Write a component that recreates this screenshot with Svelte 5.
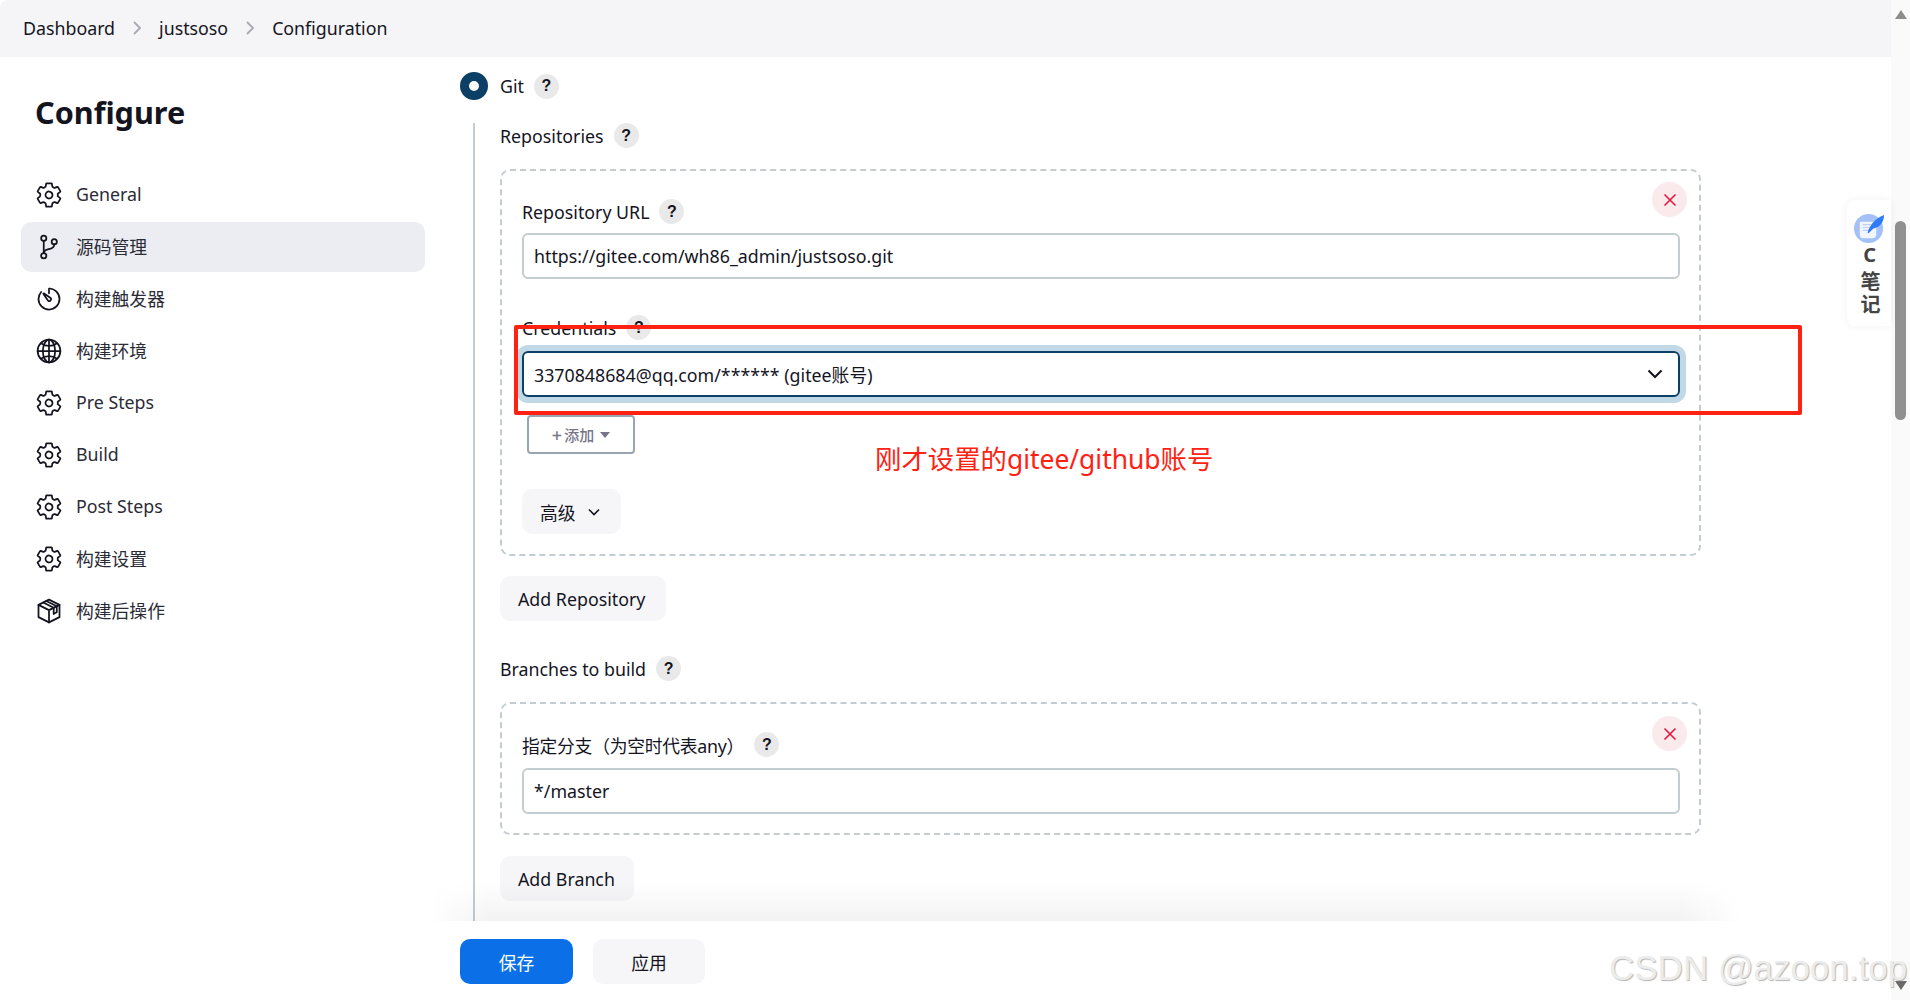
<script lang="ts">
    const crumbs = ["Dashboard", "justsoso", "Configuration"];
    const navItems = [
        { label: "General", icon: "gear" },
        { label: "源码管理", icon: "branch", active: true },
        { label: "构建触发器", icon: "timer" },
        { label: "构建环境", icon: "globe" },
        { label: "Pre Steps", icon: "gear" },
        { label: "Build", icon: "gear" },
        { label: "Post Steps", icon: "gear" },
        { label: "构建设置", icon: "gear" },
        { label: "构建后操作", icon: "cube" },
    ];
    const gear = "M262.29 192.31a64 64 0 1057.4 57.4 64.13 64.13 0 00-57.4-57.4zM416.39 256a154.34 154.34 0 01-1.53 20.79l45.21 35.46a10.81 10.81 0 012.45 13.75l-42.77 74a10.81 10.81 0 01-13.14 4.59l-44.9-18.08a16.11 16.11 0 00-15.17 1.75A164.48 164.48 0 01325 400.8a15.94 15.94 0 00-8.82 12.14l-6.73 47.89a11.08 11.08 0 01-10.68 9.17h-85.54a11.11 11.11 0 01-10.69-8.87l-6.72-47.82a16.07 16.07 0 00-9-12.22 155.3 155.3 0 01-21.46-12.57 16 16 0 00-15.11-1.71l-44.89 18.07a10.81 10.81 0 01-13.14-4.58l-42.77-74a10.8 10.8 0 012.45-13.75l38.21-30a16.05 16.05 0 006-14.08c-.36-4.17-.58-8.33-.58-12.5s.21-8.27.58-12.35a16 16 0 00-6.07-13.94l-38.19-30A10.81 10.81 0 0149.48 186l42.77-74a10.81 10.81 0 0113.14-4.59l44.9 18.08a16.11 16.11 0 0015.17-1.75A164.48 164.48 0 01187 111.2a15.94 15.94 0 008.82-12.14l6.73-47.89A11.08 11.08 0 01213.23 42h85.54a11.11 11.11 0 0110.69 8.87l6.72 47.82a16.07 16.07 0 009 12.22 155.3 155.3 0 0121.46 12.57 16 16 0 0015.11 1.71l44.89-18.07a10.81 10.81 0 0113.14 4.58l42.77 74a10.8 10.8 0 01-2.45 13.75l-38.21 30a16.05 16.05 0 00-6.05 14.08c.33 4.14.55 8.3.55 12.47z";
</script>

{#snippet help()}
    <span class="help">?</span>
{/snippet}

{#snippet closeBtn()}
    <span class="close">
        <svg viewBox="0 0 16 16" width="16" height="16"><path d="M2.5 2.5l11 11M13.5 2.5l-11 11" /></svg>
    </span>
{/snippet}

{#snippet navIcon(name: string)}
    <svg class="nav-icon" viewBox="0 0 512 512">
        {#if name === "gear"}
            <path d={gear} />
        {:else if name === "branch"}
            <circle cx="160" cy="96" r="48" />
            <circle cx="160" cy="416" r="48" />
            <path d="M160 368V144" />
            <circle cx="352" cy="160" r="48" />
            <path d="M352 208c0 128-192 48-192 160" />
        {:else if name === "timer"}
            <path d="M112.91 128A191.85 191.85 0 0064 254c-1.18 106.35 85.65 193.8 192 194 106.2.2 192-85.83 192-192 0-104.54-83.55-189.61-187.5-192a4.36 4.36 0 00-4.5 4.37V152" />
            <path d="M233.38 278.63l-79-113a8.13 8.13 0 0111.32-11.32l113 79a32.5 32.5 0 01-37.25 53.26 33.21 33.21 0 01-8.07-8.01z" />
        {:else if name === "globe"}
            <path d="M256 48C141.13 48 48 141.13 48 256s93.13 208 208 208 208-93.13 208-208S370.87 48 256 48z" />
            <path d="M256 48c-58.07 0-112.67 93.13-112.67 208S197.93 464 256 464s112.67-93.13 112.67-208S314.07 48 256 48z" />
            <path d="M117.33 117.33c38.24 27.15 86.38 43.34 138.67 43.34s100.43-16.19 138.67-43.34M394.67 394.67c-38.24-27.15-86.38-43.34-138.67-43.34s-100.43 16.19-138.67 43.34" />
            <path d="M256 48v416M464 256H48" />
        {:else}
            <path d="M256 48l192 96v224L256 464 64 368V144z" />
            <path d="M64 144l192 96 192-96M256 240v224" />
            <path d="M150 101l192 96v110M206 73l192 96" />
            <path d="M342 307l56-28V169" />
        {/if}
    </svg>
{/snippet}

<div class="shell">
    <div class="page">
        <nav class="breadcrumb">
            {#each crumbs as crumb, i}
                {#if i > 0}
                    <svg class="crumb-sep" viewBox="0 0 10 16" width="10" height="16"><path d="M2 2l6 6-6 6" /></svg>
                {/if}
                <span>{crumb}</span>
            {/each}
        </nav>

        <div class="content">
            <aside class="sidebar">
                <h1>Configure</h1>
                <ul>
                    {#each navItems as item}
                        <li class:active={item.active}>
                            {@render navIcon(item.icon)}
                            <span>{item.label}</span>
                        </li>
                    {/each}
                </ul>
            </aside>

            <main class="main">
                <div class="git-row">
                    <span class="radio"></span>
                    <span class="git-name">Git</span>
                    {@render help()}
                </div>
                <div class="git-body">
                    <div class="label">Repositories {@render help()}</div>

                    <section class="repeat repo">
                        {@render closeBtn()}
                        <div class="label">Repository URL {@render help()}</div>
                        <input class="text-input" type="text" readonly value="https://gitee.com/wh86_admin/justsoso.git" />

                        <div class="label cred">Credentials {@render help()}</div>
                        <div class="select">
                            <span>3370848684@qq.com/****** (gitee账号)</span>
                            <svg viewBox="0 0 16 10" width="16" height="10"><path d="M1.5 1.5L8 8l6.5-6.5" /></svg>
                        </div>
                        <button class="add-cred"><span class="plus">+</span>添加<i class="caret"></i></button>
                        <button class="btn advanced">
                            高级
                            <svg viewBox="0 0 12 8" width="12" height="8"><path d="M1 1.5l5 5 5-5" /></svg>
                        </button>
                    </section>

                    <button class="btn add-repo">Add Repository</button>

                    <div class="label branches">Branches to build {@render help()}</div>

                    <section class="repeat branch">
                        {@render closeBtn()}
                        <div class="label cn">指定分支（为空时代表any） {@render help()}</div>
                        <input class="text-input" type="text" readonly value="*/master" />
                    </section>

                    <button class="btn add-branch">Add Branch</button>
                </div>
            </main>
        </div>

        <footer class="footer">
            <button class="save">保存</button>
            <button class="btn apply">应用</button>
        </footer>
    </div>

    <div class="scrollbar">
        <i class="arrow up"></i>
        <div class="track"><div class="thumb"></div></div>
        <i class="arrow down"></i>
    </div>

    <!-- annotation drawn on top of the screenshot -->
    <div class="red-box"></div>
    <div class="red-note">刚才设置的gitee/github账号</div>

    <div class="note-widget">
        <svg viewBox="0 0 32 32" width="31" height="31">
            <circle cx="15" cy="16" r="15" fill="#a3c0f7" />
            <path d="M6 9h17v13q0 4-4 4H9q-3 0-3-4z" fill="#f1f5fe" />
            <path d="M9 12h9M9 15h8M9 18h6" stroke="#bfd0f5" stroke-width="1.2" />
            <path d="M14 20C17 11 23 5 31 2c0 8-5 13-11 14l-5 5z" fill="#2f7bf5" />
        </svg>
        <b>C笔记</b>
    </div>

    <div class="watermark">CSDN @azoon.top</div>
</div>

<style>
    :global(body) {
        margin: 0;
        background: #fff;
    }

    .shell {
        position: relative;
        display: flex;
        width: 1910px;
        height: 1000px;
        overflow: hidden;
        font-family: "Noto Sans", "Noto Sans CJK SC", sans-serif;
        font-size: 17.8px;
        color: #14141f;
    }

    .page {
        flex: 1;
        min-width: 0;
        display: flex;
        flex-direction: column;
    }

    .breadcrumb {
        height: 57px;
        flex: none;
        box-sizing: border-box;
        padding: 0 0 2px 23px;
        display: flex;
        align-items: center;
        gap: 17px;
        background: #f5f5f7;
        border-top-left-radius: 8px;
    }

    .crumb-sep path {
        fill: none;
        stroke: #a9a9b5;
        stroke-width: 1.8;
    }

    .content {
        flex: 1;
        min-height: 0;
        display: flex;
        overflow: hidden;
    }

    .sidebar {
        width: 460px;
        flex: none;
        box-sizing: border-box;
        padding: 32px 0 0 21px;
    }

    .sidebar h1 {
        margin: 0 0 35px 14px;
        font-size: 30.6px;
        line-height: 46px;
        font-weight: 700;
    }

    .sidebar ul {
        list-style: none;
        margin: 0;
        padding: 0;
        width: 404px;
        display: flex;
        flex-direction: column;
        gap: 2px;
    }

    .sidebar li {
        height: 50px;
        display: flex;
        align-items: center;
        gap: 13px;
        padding-left: 14px;
        border-radius: 10px;
        color: #2b2b36;
    }

    .sidebar li span {
        margin-top: -2px;
    }

    .sidebar li.active {
        background: #ecedf2;
    }

    .nav-icon {
        width: 28px;
        height: 28px;
        flex: none;
    }

    .nav-icon :global(path),
    .nav-icon :global(circle) {
        fill: none;
        stroke: #14141f;
        stroke-width: 32;
        stroke-linecap: round;
        stroke-linejoin: round;
    }

    .main {
        flex: 1;
        min-width: 0;
    }

    .git-row {
        height: 28px;
        margin-top: 15px;
        display: flex;
        align-items: center;
        gap: 12px;
    }

    .radio {
        width: 10px;
        height: 10px;
        border: 9px solid #0b3f66;
        border-radius: 50%;
        background: #fff;
    }

    .git-name {
        margin-right: -2px;
    }

    .git-body {
        margin: 23px 0 0 13px;
        padding: 0 0 200px 25px;
        width: 1203px;
        border-left: 2px solid #c3ccd1;
    }

    .label {
        display: flex;
        align-items: center;
        gap: 10px;
        height: 25px;
    }

    .label.cn {
        letter-spacing: -0.25px;
    }

    .help {
        width: 25px;
        height: 25px;
        flex: none;
        display: flex;
        align-items: center;
        justify-content: center;
        border-radius: 50%;
        background: #e9e9e9;
        font-size: 16px;
        font-weight: 700;
        font-family: "Liberation Sans", sans-serif;
    }

    .repeat {
        position: relative;
        box-sizing: border-box;
        width: 1201px;
        border: 2px dashed #c3ccd1;
        border-radius: 10px;
        padding: 28px 19px 0 20px;
    }

    .repo {
        margin-top: 21px;
        height: 387px;
    }

    .close {
        position: absolute;
        top: 11px;
        right: 12px;
        width: 35px;
        height: 35px;
        display: flex;
        align-items: center;
        justify-content: center;
        border-radius: 50%;
        background: #fbeaec;
    }

    .branch .close {
        top: 12px;
    }

    .close path {
        fill: none;
        stroke: #e6183f;
        stroke-width: 1.6;
    }

    .text-input {
        display: block;
        box-sizing: border-box;
        width: 100%;
        height: 46px;
        margin-top: 9px;
        padding: 0 10px;
        border: 2px solid #c3ccd1;
        border-radius: 6px;
        outline: none;
        background: #fff;
        font: inherit;
        color: inherit;
    }

    .label.cred {
        margin-top: 36px;
    }

    .select {
        box-sizing: border-box;
        height: 46px;
        margin-top: 11px;
        padding: 0 15px 0 10px;
        display: flex;
        align-items: center;
        justify-content: space-between;
        border: 2px solid #0b3f66;
        border-radius: 6px;
        box-shadow: 0 0 0 6px #c1d8e6;
    }

    .select path {
        fill: none;
        stroke: #14141f;
        stroke-width: 2;
    }

    button {
        font: inherit;
        color: inherit;
        cursor: pointer;
    }

    .add-cred {
        display: flex;
        align-items: center;
        justify-content: center;
        width: 108px;
        height: 39px;
        margin: 18px 0 0 5px;
        padding: 0;
        border: 2px solid #9aa5b1;
        border-radius: 4px;
        background: #fff;
        color: #767689;
        font-size: 15px;
        font-weight: 500;
    }

    .plus {
        font-size: 18px;
        margin-right: 2px;
    }

    .caret {
        margin-left: 6px;
        border: 5px solid transparent;
        border-top: 6px solid #767689;
        border-bottom: 0;
    }

    .btn {
        display: flex;
        align-items: center;
        height: 45px;
        padding: 0 18px;
        border: none;
        border-radius: 10px;
        background: #f6f6f8;
    }

    .advanced {
        margin-top: 35px;
        gap: 12px;
        width: 99px;
    }

    .btn path {
        fill: none;
        stroke: #14141f;
        stroke-width: 1.6;
    }

    .add-repo {
        width: 166px;
        margin-top: 20px;
    }

    .label.branches {
        margin-top: 35px;
    }

    .branch {
        margin-top: 21px;
        height: 133px;
    }

    .branch .text-input {
        margin-top: 11px;
    }

    .add-branch {
        width: 134px;
        margin-top: 21px;
    }

    .footer {
        position: relative;
        height: 79px;
        flex: none;
        box-sizing: border-box;
        padding: 18px 0 0 460px;
        display: flex;
        gap: 20px;
        background: #fff;
    }

    /* soft shadow the sticky bar throws on the form above it */
    .footer::before {
        content: "";
        position: absolute;
        left: 430px;
        bottom: 100%;
        width: 1310px;
        height: 38px;
        background: linear-gradient(to top, rgba(20, 20, 31, 0.055), transparent);
        mask-image: linear-gradient(to right, transparent, #000 60px, #000 1250px, transparent);
    }

    .save {
        width: 113px;
        height: 45px;
        border: none;
        border-radius: 10px;
        background: #0b6fe8;
        color: #fff;
    }

    .apply {
        width: 112px;
        justify-content: center;
        padding: 0;
    }

    .scrollbar {
        width: 19px;
        flex: none;
        display: flex;
        flex-direction: column;
        align-items: center;
        background: #fafafa;
    }

    .track {
        flex: 1;
        width: 100%;
    }

    .thumb {
        width: 11px;
        height: 199px;
        margin: 202px auto 0;
        border-radius: 6px;
        background: #909090;
    }

    .arrow {
        flex: none;
        border-left: 6px solid transparent;
        border-right: 6px solid transparent;
    }

    .arrow.up {
        margin-top: 10px;
        border-bottom: 9px solid #8d8d8d;
    }

    .arrow.down {
        margin-bottom: 10px;
        border-top: 9px solid #6a6a6a;
    }

    .red-box {
        position: absolute;
        left: 514px;
        top: 325px;
        width: 1288px;
        height: 90px;
        box-sizing: border-box;
        border: 4px solid #ff2212;
        border-radius: 2px;
    }

    .red-note {
        position: absolute;
        left: 875px;
        top: 440px;
        font-size: 26.4px;
        line-height: 38px;
        color: #ff2212;
    }

    .note-widget {
        position: absolute;
        left: 1847px;
        top: 200px;
        width: 44px;
        height: 126px;
        box-sizing: border-box;
        padding-top: 13px;
        display: flex;
        flex-direction: column;
        align-items: center;
        background: #fff;
        border-radius: 8px 0 0 8px;
        box-shadow: 0 0 10px rgba(0, 0, 0, 0.06);
        color: #444;
    }

    .note-widget b {
        margin-top: -3px;
        writing-mode: vertical-rl;
        text-orientation: upright;
        font-size: 20px;
        line-height: 1;
        letter-spacing: 3px;
    }

    .watermark {
        position: absolute;
        left: 1609px;
        top: 945px;
        font-family: "Liberation Sans", sans-serif;
        font-size: 35px;
        line-height: 46px;
        white-space: nowrap;
        color: #ececec;
        text-shadow: 1px 1px 1px #b5b5b5;
    }
</style>
